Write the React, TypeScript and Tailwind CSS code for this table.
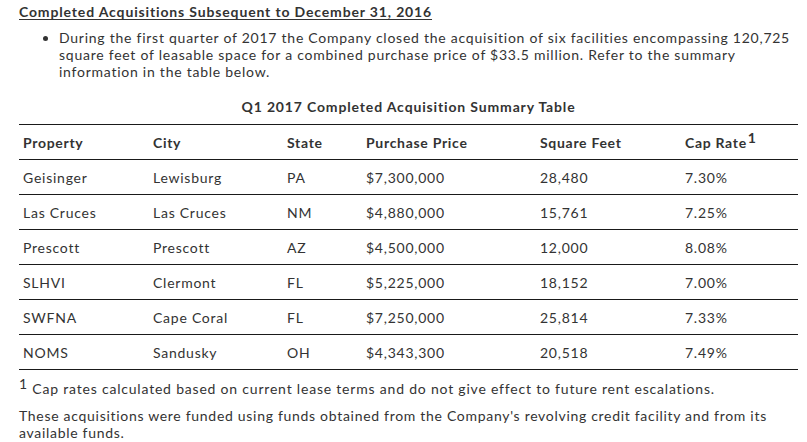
import React from "react";

const rows = [
  ["Geisinger", "Lewisburg", "PA", "$7,300,000", "28,480", "7.30%"],
  ["Las Cruces", "Las Cruces", "NM", "$4,880,000", "15,761", "7.25%"],
  ["Prescott", "Prescott", "AZ", "$4,500,000", "12,000", "8.08%"],
  ["SLHVI", "Clermont", "FL", "$5,225,000", "18,152", "7.00%"],
  ["SWFNA", "Cape Coral", "FL", "$7,250,000", "25,814", "7.33%"],
  ["NOMS", "Sandusky", "OH", "$4,343,300", "20,518", "7.49%"],
];

export default function App() {
  return (
    <div className="w-[807px] h-[442px] bg-white text-[#333333] text-[14px] leading-[17px] font-['Lato','Liberation_Sans',sans-serif] pl-[19px] pr-[9px] pt-[3px] overflow-hidden">
      <h2 className="font-bold underline underline-offset-[2px] tracking-[0.85px]">
        Completed Acquisitions Subsequent to December 31, 2016
      </h2>
      <ul className="mt-[9px] pl-[40px] list-disc tracking-[0.75px]">
        <li>
          During the first quarter of 2017 the Company closed the acquisition of six facilities encompassing 120,725 square feet of leasable space for a combined purchase price of $33.5 million. Refer to the summary information in the table below.
        </li>
      </ul>
      <table className="mt-[18px] w-[779px] border-collapse tracking-[0.75px]">
        <caption className="font-bold pb-[9px] tracking-[0.85px]">Q1 2017 Completed Acquisition Summary Table</caption>
        <colgroup>
          <col className="w-[130px]" />
          <col className="w-[134px]" />
          <col className="w-[79px]" />
          <col className="w-[174px]" />
          <col className="w-[145px]" />
          <col className="w-[117px]" />
        </colgroup>
        <thead>
          <tr className="border-t border-b border-[#1a1a1a] h-[35px]">
            <th className="text-left font-bold pl-[4px] tracking-[0.7px]">Property</th>
            <th className="text-left font-bold pl-[4px] tracking-[0.7px]">City</th>
            <th className="text-left font-bold pl-[4px] tracking-[0.7px]">State</th>
            <th className="text-left font-bold pl-[4px] tracking-[0.7px]">Purchase Price</th>
            <th className="text-left font-bold pl-[4px] tracking-[0.7px]">Square Feet</th>
            <th className="text-left font-bold pl-[4px] tracking-[0.7px]">
              Cap Rate<sup className="text-[14px] relative -top-[5px] ml-[1px]">1</sup>
            </th>
          </tr>
        </thead>
        <tbody>
          {rows.map((r) => (
            <tr key={r[0]} className="border-b border-[#1a1a1a] h-[35px]">
              {r.map((c, i) => (
                <td key={i} className="pl-[4px]">{c}</td>
              ))}
            </tr>
          ))}
        </tbody>
      </table>
      <p className="mt-[10px] tracking-[0.8px]">
        <sup className="text-[14px] relative -top-[5px]">1</sup> Cap rates calculated based on current lease terms and do not give effect to future rent escalations.
      </p>
      <p className="mt-[10px] tracking-[0.7px]">
        These acquisitions were funded using funds obtained from the Company's revolving credit facility and from its available funds.
      </p>
    </div>
  );
}
